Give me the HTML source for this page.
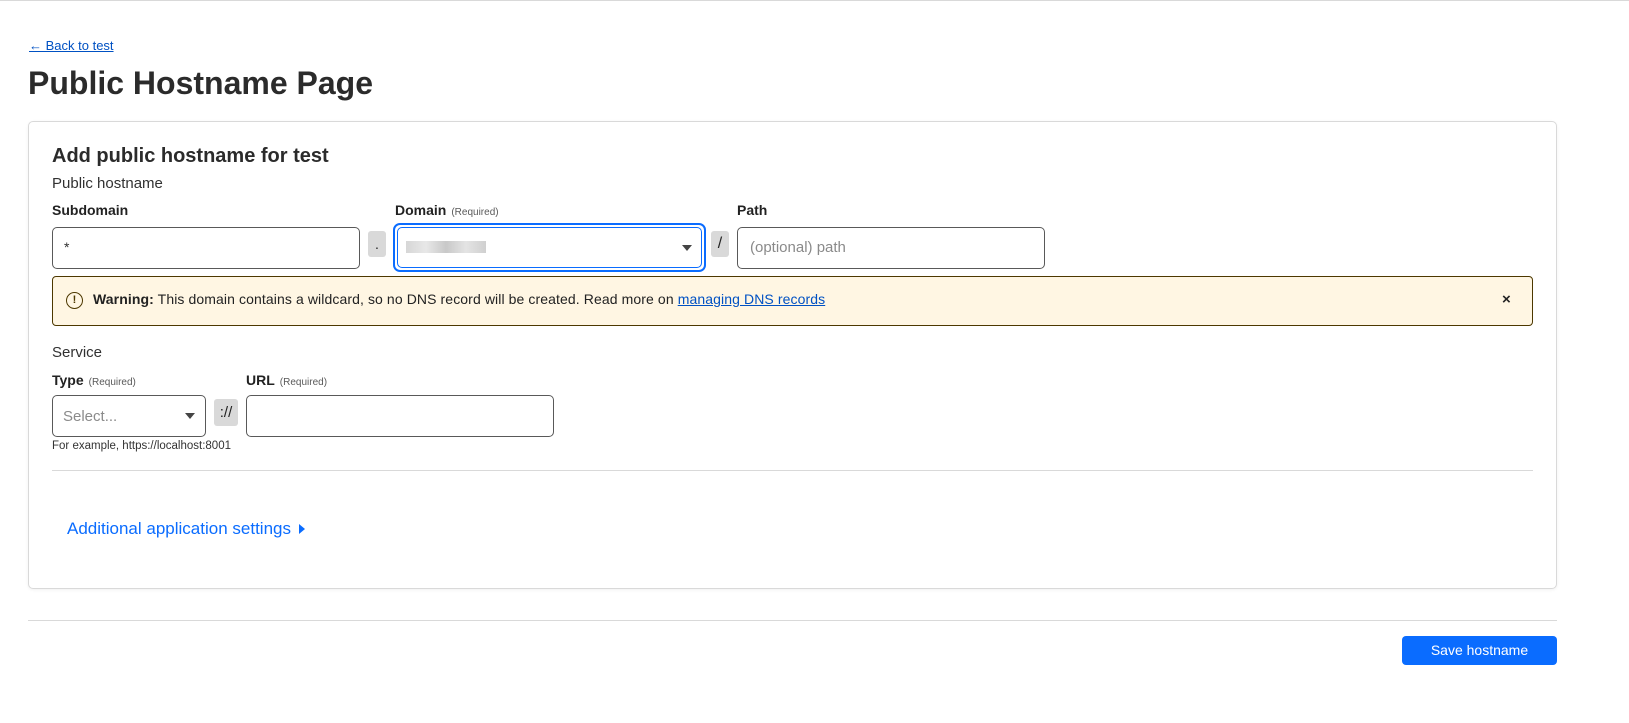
<!DOCTYPE html>
<html><head><meta charset="utf-8"><style>
*{box-sizing:border-box;margin:0;padding:0}
body{width:1629px;height:723px;background:#fff;font-family:"Liberation Sans",sans-serif;color:#313131;position:relative;overflow:hidden;border-top:1px solid #d9d9d9}
.a{position:absolute;white-space:nowrap}
.inp{position:absolute;border:1px solid #595959;border-radius:5px;background:#fff}
.box{position:absolute;background:#d9d9d9;border-radius:3px;text-align:center;color:#222}
.req{font-size:10px;font-weight:normal;color:#595959;margin-left:5px}
.lbl{font-size:14px;font-weight:bold;color:#222}
.caret{position:absolute;width:0;height:0;border-left:5px solid transparent;border-right:5px solid transparent;border-top:6px solid #444}
</style></head><body>
<a class="a" style="left:29px;top:37px;font-size:13px;color:#0051c3;text-decoration:underline">← Back to test</a>
<div class="a" style="left:28px;top:64px;font-size:32px;font-weight:bold;color:#2b2b2b">Public Hostname Page</div>
<div class="a" style="left:28px;top:120px;width:1529px;height:468px;border:1px solid #d9d9d9;border-radius:5px;box-shadow:0 1px 3px rgba(0,0,0,.06)"></div>
<div class="a" style="left:52px;top:144px;font-size:20px;font-weight:bold;color:#2b2b2b">Add public hostname for test</div>
<div class="a" style="left:52px;top:174px;font-size:15px">Public hostname</div>
<div class="a lbl" style="left:52px;top:201px">Subdomain</div>
<div class="a lbl" style="left:395px;top:201px">Domain<span class="req">(Required)</span></div>
<div class="a lbl" style="left:737px;top:201px">Path</div>
<div class="inp" style="left:52px;top:226px;width:308px;height:42px"><span class="a" style="left:11px;top:11px;font-size:14px">*</span></div>
<div class="box" style="left:368px;top:230px;width:18px;height:26px;font-size:14px;line-height:26px">.</div>
<div class="a" style="left:393px;top:222px;width:313px;height:49px;border:2px solid #0a6cff;border-radius:7px"></div>
<div class="inp" style="left:397px;top:226px;width:305px;height:41px;border-color:#0a6cff"><span class="a" style="left:8px;top:13px;width:80px;height:12px;background:linear-gradient(90deg,#ccc,#e2e2e2,#bbb,#ddd,#c4c4c4);opacity:.8"></span><span class="caret" style="left:284px;top:17px"></span></div>
<div class="box" style="left:711px;top:230px;width:18px;height:26px;font-size:16px;line-height:26px">/</div>
<div class="inp" style="left:737px;top:226px;width:308px;height:42px"><span class="a" style="left:12px;top:11px;font-size:15px;color:#8a8a8a">(optional) path</span></div>
<div class="a" style="left:52px;top:275px;width:1481px;height:50px;background:#fff6e3;border:1px solid #4d3800;border-radius:4px"></div>
<div class="a" style="left:66px;top:291px;width:17px;height:17px;border:1.5px solid #4d3800;border-radius:50%;font-size:11px;font-weight:bold;text-align:center;line-height:14px;color:#4d3800">!</div>
<div class="a" style="left:93px;top:290px;font-size:14px;letter-spacing:0.1px;color:#222"><b>Warning:</b> This domain contains a wildcard, so no DNS record will be created. Read more on <span style="color:#0051c3;text-decoration:underline">managing DNS records</span></div>
<div class="a" style="left:1502px;top:290px;font-size:15px;font-weight:bold;color:#222">×</div>
<div class="a" style="left:52px;top:343px;font-size:15px">Service</div>
<div class="a lbl" style="left:52px;top:371px">Type<span class="req">(Required)</span></div>
<div class="a lbl" style="left:246px;top:371px">URL<span class="req">(Required)</span></div>
<div class="inp" style="left:52px;top:394px;width:154px;height:42px"><span class="a" style="left:10px;top:12px;font-size:15px;color:#8a8a8a">Select...</span><span class="caret" style="left:132px;top:17px"></span></div>
<div class="box" style="left:214px;top:398px;width:24px;height:27px;font-size:15px;line-height:27px">://</div>
<div class="inp" style="left:246px;top:394px;width:308px;height:42px"></div>
<div class="a" style="left:52px;top:439px;font-size:11.5px;color:#333">For example, https://localhost:8001</div>
<div class="a" style="left:52px;top:469px;width:1481px;height:1px;background:#d9d9d9"></div>
<div class="a" style="left:67px;top:518px;font-size:17px;color:#0a6cff">Additional application settings <span style="display:inline-block;width:0;height:0;border-top:5px solid transparent;border-bottom:5px solid transparent;border-left:6px solid #0a6cff;margin-left:3px"></span></div>
<div class="a" style="left:28px;top:619px;width:1529px;height:1px;background:#d9d9d9"></div>
<div class="a" style="left:1402px;top:635px;width:155px;height:29px;background:#0a6cff;border-radius:4px;color:#fff;font-size:14px;text-align:center;line-height:29px">Save hostname</div>
</body></html>
